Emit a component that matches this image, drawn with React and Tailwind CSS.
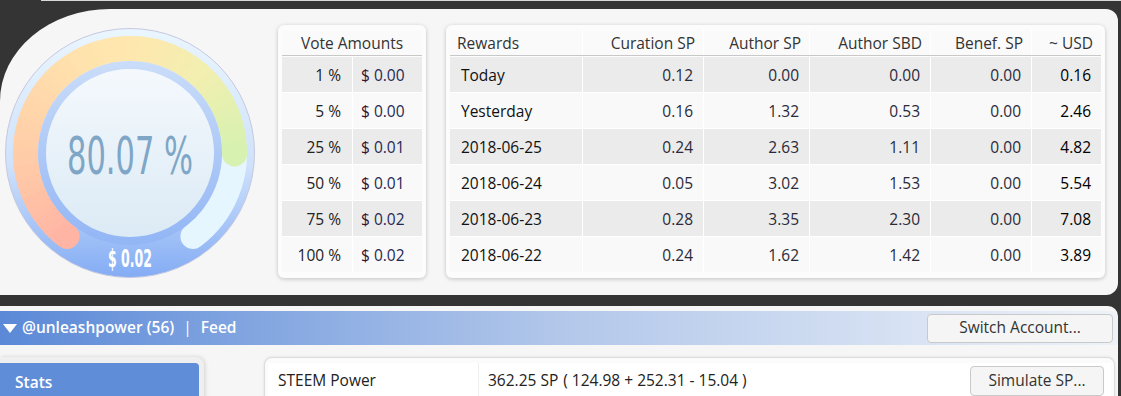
import React from "react";

const rewards = [
  ["Today", "0.12", "0.00", "0.00", "0.00", "0.16"],
  ["Yesterday", "0.16", "1.32", "0.53", "0.00", "2.46"],
  ["2018-06-25", "0.24", "2.63", "1.11", "0.00", "4.82"],
  ["2018-06-24", "0.05", "3.02", "1.53", "0.00", "5.54"],
  ["2018-06-23", "0.28", "3.35", "2.30", "0.00", "7.08"],
  ["2018-06-22", "0.24", "1.62", "1.42", "0.00", "3.89"],
];

const votes = [
  ["1 %", "0.00"],
  ["5 %", "0.00"],
  ["25 %", "0.01"],
  ["50 %", "0.01"],
  ["75 %", "0.02"],
  ["100 %", "0.02"],
];

// colour stops along the arc (angle in degrees, clockwise from top)
const stops = [
  [-143, [255, 180, 164]],
  [-90, [255, 205, 168]],
  [-30, [255, 226, 173]],
  [0, [255, 231, 174]],
  [40, [243, 239, 176]],
  [90, [214, 241, 176]],
];

function colorAt(a) {
  for (let i = 0; i < stops.length - 1; i++) {
    const [a0, c0] = stops[i];
    const [a1, c1] = stops[i + 1];
    if (a >= a0 && a <= a1) {
      const t = (a - a0) / (a1 - a0);
      const c = c0.map((v, k) => Math.round(v + (c1[k] - v) * t));
      return `rgb(${c[0]},${c[1]},${c[2]})`;
    }
  }
  const c = stops[stops.length - 1][1];
  return `rgb(${c[0]},${c[1]},${c[2]})`;
}

const CX = 125;
const CY = 125;
const R = 104.5;

function pt(a) {
  const r = (a * Math.PI) / 180;
  return [CX + R * Math.sin(r), CY - R * Math.cos(r)];
}

function arc(a0, a1) {
  const [x0, y0] = pt(a0);
  const [x1, y1] = pt(a1);
  const large = a1 - a0 > 180 ? 1 : 0;
  return `M ${x0} ${y0} A ${R} ${R} 0 ${large} 1 ${x1} ${y1}`;
}

function Gauge() {
  const start = -143;
  const end = 90.5;
  const segs = [];
  const n = 70;
  for (let i = 0; i < n; i++) {
    const a0 = start + ((end - start) * i) / n;
    const a1 = start + ((end - start) * (i + 1)) / n;
    segs.push(
      <path
        key={i}
        d={arc(a0, Math.min(a1 + 0.6, end))}
        stroke={colorAt((a0 + a1) / 2)}
        strokeWidth="25"
        fill="none"
      />
    );
  }
  const [sx, sy] = pt(start);
  const [ex, ey] = pt(end);
  return (
    <svg width="250" height="250" viewBox="0 0 250 250" className="shrink-0">
      <defs>
        <linearGradient id="outer" x1="0" y1="0" x2="0" y2="1">
          <stop offset="0" stopColor="#eaf6ff" />
          <stop offset="0.55" stopColor="#cfe2fb" />
          <stop offset="1" stopColor="#84acf4" />
        </linearGradient>
        <linearGradient id="ring" x1="0" y1="0" x2="0" y2="1">
          <stop offset="0" stopColor="#c9dcf9" />
          <stop offset="1" stopColor="#93b6f5" />
        </linearGradient>
        <linearGradient id="disk" x1="0" y1="0" x2="0" y2="1">
          <stop offset="0" stopColor="#f5f9fd" />
          <stop offset="1" stopColor="#dbeaf5" />
        </linearGradient>
      </defs>
      <circle cx={CX} cy={CY} r="124.5" fill="url(#outer)" stroke="#c6c8df" strokeWidth="1" />
      <path d={arc(80, 143)} stroke="#e6f6ff" strokeWidth="25" strokeLinecap="round" fill="none" />
      {segs}
      <circle cx={sx} cy={sy} r="12.5" fill={colorAt(start)} />
      <circle cx={ex} cy={ey} r="12.5" fill={colorAt(end)} />
      <circle cx={CX} cy={CY} r="88" fill="url(#disk)" stroke="url(#ring)" strokeWidth="8" />
      <text
        x={CX}
        y="146"
        textAnchor="middle"
        fill="#7fa6c6"
        fontSize="52"
        textLength="126"
        lengthAdjust="spacingAndGlyphs"
        style={{ fontFamily: '"DejaVu Sans Condensed", "Liberation Sans", sans-serif' }}
      >
        80.07 %
      </text>
      <text
        x={CX}
        y="239"
        textAnchor="middle"
        fill="#ffffff"
        fontSize="24"
        fontWeight="bold"
        textLength="44"
        lengthAdjust="spacingAndGlyphs"
        style={{ fontFamily: '"DejaVu Sans Condensed", "Liberation Sans", sans-serif' }}
      >
        $ 0.02
      </text>
    </svg>
  );
}

function VoteCard() {
  return (
    <div className="ml-[23px] w-[148px] h-[253px] shrink-0 rounded-[6px] bg-[#fcfcfc] px-[4px] pt-[5px] shadow-[0_1px_4px_rgba(0,0,0,0.22)]">
      <div className="h-[26px] flex items-center justify-center pt-[2px] border-b border-[#c8c8c8] bg-[#fafafa] text-[#333]">
        Vote Amounts
      </div>
      <div className="mt-px grid grid-cols-[70px_69px] gap-px bg-white">
        {votes.map(([p, v], i) => {
          const bg = i % 2 === 0 ? "bg-[#ebebeb]" : "bg-[#f9f9f9]";
          return (
            <React.Fragment key={p}>
              <div className={`h-[35px] flex items-center justify-end pt-[2px] pr-[11px] text-[#222] ${bg}`}>{p}</div>
              <div className={`h-[35px] flex items-center pt-[2px] pl-[8px] ${bg}`}>
                <span className="text-[#3a1030]">$</span>
                <span className="ml-[4px] text-[#1f2a55]">{v}</span>
              </div>
            </React.Fragment>
          );
        })}
      </div>
    </div>
  );
}

const cols = "grid grid-cols-[132px_120px_105px_120px_100px_69px] gap-px";

function RewardsCard() {
  const heads = ["Curation SP", "Author SP", "Author SBD", "Benef. SP", "~ USD"];
  return (
    <div className="ml-[20px] w-[659px] h-[253px] shrink-0 rounded-[6px] bg-[#fcfcfc] px-[4px] pt-[5px] shadow-[0_1px_4px_rgba(0,0,0,0.22)]">
      <div className={`${cols} bg-white border-b border-[#c8c8c8]`}>
        <div className="h-[25px] flex items-center pt-[2px] pl-[7px] bg-[#fafafa] text-[#333]">Rewards</div>
        {heads.map((h) => (
          <div key={h} className="h-[25px] flex items-center justify-end pt-[2px] pr-[8px] bg-[#fafafa] text-[#333]">
            {h}
          </div>
        ))}
      </div>
      <div className={`${cols} mt-px bg-white`}>
        {rewards.map((row, i) => {
          const bg = i % 2 === 0 ? "bg-[#ebebeb]" : "bg-[#f9f9f9]";
          return row.map((c, j) => (
            <div
              key={i + "-" + j}
              className={`h-[35px] flex items-center pt-[2px] ${bg} ${
                j === 0
                  ? "pl-[11px] text-[#111]"
                  : j === 5
                  ? "justify-end pr-[10px] text-black font-medium"
                  : "justify-end pr-[10px] text-[#2a2a3a]"
              }`}
            >
              {c}
            </div>
          ));
        })}
      </div>
    </div>
  );
}

export default function App() {
  return (
    <div
      className="w-[1121px] h-[396px] overflow-hidden bg-[#343434] text-[15.5px]"
      style={{ fontFamily: '"Open Sans", "Liberation Sans", sans-serif' }}
    >
      <div className="ml-[41px] h-px bg-[#d8d8d8]" />
      <div className="mt-[8px] mr-[3px] h-[286px] flex items-start bg-[#f6f6f6] rounded-tl-[110px_92px] rounded-r-[12px] pt-[16px]">
        <div className="ml-[5px] mt-[3px]">
          <Gauge />
        </div>
        <VoteCard />
        <RewardsCard />
      </div>

      <div className="mt-[11px] mr-[3px] h-[120px] bg-[#f6f6f6] rounded-tr-[10px] pt-[5px]">
        <div className="h-[34px] flex items-center bg-gradient-to-r from-[#5b89d7] via-[#b2c7ea] to-[#eef2f8] rounded-tr-[8px]">
          <svg width="14" height="9" viewBox="0 0 14 9" className="ml-[3px]">
            <polygon points="0,0 14,0 7,9" fill="#ffffff" />
          </svg>
          <span className="ml-[5px] text-white font-semibold">@unleashpower (56)</span>
          <span className="ml-[9px] text-white">|</span>
          <span className="ml-[9px] text-white font-semibold">Feed</span>
          <button className="ml-auto mr-[5px] h-[29px] w-[186px] rounded-[4px] border border-[#c9c9c9] bg-[#f5f5f5] text-[#333]">
            Switch Account...
          </button>
        </div>

        <div className="mt-[12px] flex items-start">
          <div className="w-[204px] h-[60px] shrink-0 bg-[#efefef] rounded-tr-[8px] pt-[6px] shadow-[1px_0_4px_rgba(0,0,0,0.15)]">
            <div className="w-[199px] h-[40px] flex items-center pl-[15px] bg-[#5f8dd8] rounded-tr-[4px] text-white font-semibold">
              Stats
            </div>
          </div>
          <div className="ml-[60px] flex-1 mr-[3px] h-[60px] bg-[#fbfbfb] rounded-t-[8px] border border-[#dcdcdc] px-[3px] pt-[5px] shadow-[0_0_3px_rgba(0,0,0,0.1)]">
            <div className="h-[35px] flex items-center bg-white text-[#222]">
              <div className="w-[211px] h-full flex items-center pl-[10px] border-r border-[#eeeeee]">STEEM Power</div>
              <div className="pl-[9px]">
                <span className="font-medium">362.25 SP</span>
                <span className="ml-[5px]">( 124.98 + 252.31 - 15.04 )</span>
              </div>
              <button className="ml-auto mr-[7px] h-[30px] w-[134px] rounded-[4px] border border-[#c9c9c9] bg-[#f5f5f5] text-[#333]">
                Simulate SP...
              </button>
            </div>
            <div className="h-[20px] bg-[#f0f0f0]" />
          </div>
        </div>
      </div>
    </div>
  );
}
